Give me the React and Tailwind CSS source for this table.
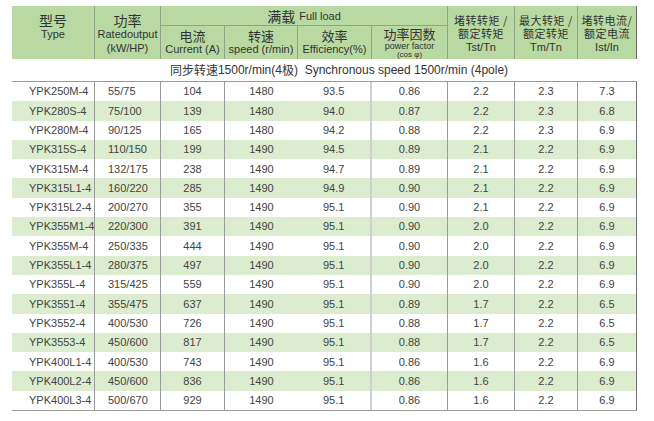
const rows = [
  ["YPK250M-4", "55/75", "104", "1480", "93.5", "0.86", "2.2", "2.3", "7.3"],
  ["YPK280S-4", "75/100", "139", "1480", "94.0", "0.87", "2.2", "2.3", "6.8"],
  ["YPK280M-4", "90/125", "165", "1480", "94.2", "0.88", "2.2", "2.3", "6.9"],
  ["YPK315S-4", "110/150", "199", "1490", "94.5", "0.89", "2.1", "2.2", "6.9"],
  ["YPK315M-4", "132/175", "238", "1490", "94.7", "0.89", "2.1", "2.2", "6.9"],
  ["YPK315L1-4", "160/220", "285", "1490", "94.9", "0.90", "2.1", "2.2", "6.9"],
  ["YPK315L2-4", "200/270", "355", "1490", "95.1", "0.90", "2.1", "2.2", "6.9"],
  ["YPK355M1-4", "220/300", "391", "1490", "95.1", "0.90", "2.0", "2.2", "6.9"],
  ["YPK355M-4", "250/335", "444", "1490", "95.1", "0.90", "2.0", "2.2", "6.9"],
  ["YPK355L1-4", "280/375", "497", "1490", "95.1", "0.90", "2.0", "2.2", "6.9"],
  ["YPK355L-4", "315/425", "559", "1490", "95.1", "0.90", "2.0", "2.2", "6.9"],
  ["YPK3551-4", "355/475", "637", "1490", "95.1", "0.89", "1.7", "2.2", "6.5"],
  ["YPK3552-4", "400/530", "726", "1490", "95.1", "0.88", "1.7", "2.2", "6.5"],
  ["YPK3553-4", "450/600", "817", "1490", "95.1", "0.88", "1.7", "2.2", "6.5"],
  ["YPK400L1-4", "400/530", "743", "1490", "95.1", "0.86", "1.6", "2.2", "6.9"],
  ["YPK400L2-4", "450/600", "836", "1490", "95.1", "0.86", "1.6", "2.2", "6.9"],
  ["YPK400L3-4", "500/670", "929", "1490", "95.1", "0.86", "1.6", "2.2", "6.9"],
];

const cols = "grid grid-cols-[83px_66px_64px_73px_74px_76px_67px_63px_59px]";
const cjk = { fontFamily: '"Noto Sans CJK SC", "Liberation Sans", sans-serif' };

// one class per body column: alignment + the vertical line on its right
const cellCls = [
  "justify-start pl-[17px] border-r border-[#9a9a9a]",
  "justify-start pl-[13px] border-r border-[#9a9a9a]",
  "justify-center border-r border-[#9a9a9a]",
  "justify-center",
  "justify-start pl-[25px] border-r-2 border-[#cfcfcf]",
  "justify-center border-r border-[#9a9a9a]",
  "justify-center border-r border-[#9a9a9a]",
  "justify-center border-r border-[#9a9a9a]",
  "justify-center border-r border-[#707070]",
];

function RatioHead({ top, unit, last }) {
  return (
    <div
      className={`row-span-2 flex flex-col items-center pt-[8px] border-r ${
        last ? "border-[#6a6a6a]" : "border-[#8ea486]"
      }`}
    >
      <span className="text-[11px] leading-[13px] whitespace-nowrap tracking-[0.5px]" style={cjk}>{top}</span>
      <span className="text-[11px] leading-[13px] tracking-[0.5px]" style={cjk}>{last ? "额定电流" : "额定转矩"}</span>
      <span className="text-[11px] leading-[14px]">{unit}</span>
    </div>
  );
}

function Header() {
  return (
    <div className={`${cols} grid-rows-[20px_33px] bg-[#b8d9a1] text-[#333]`}>
      <div className="row-span-2 flex flex-col items-center pt-[6px] border-r border-[#8ea486]">
        <span className="text-[14px] leading-[16px]" style={cjk}>型号</span>
        <span className="text-[11px] leading-[13px]">Type</span>
      </div>
      <div className="row-span-2 flex flex-col items-center pt-[6px] border-r border-[#8ea486]">
        <span className="text-[14px] leading-[16px]" style={cjk}>功率</span>
        <span className="text-[11px] leading-[13px]">Ratedoutput</span>
        <span className="text-[11px] leading-[15px]">(kW/HP)</span>
      </div>
      <div className="col-span-4 flex items-center justify-center gap-1 border-r border-b border-[#8ea486]">
        <span className="text-[14px] leading-[16px]" style={cjk}>满载</span>
        <span className="text-[11px] leading-[13px] pt-[1px]">Full load</span>
      </div>
      <RatioHead top="堵转转矩 /" unit="Tst/Tn" />
      <RatioHead top="最大转矩 /" unit="Tm/Tn" />
      <RatioHead top="堵转电流/" unit="Ist/In" last />

      <div className="flex flex-col items-center pt-[2px] border-r border-[#8ea486]">
        <span className="text-[13px] leading-[15px]" style={cjk}>电流</span>
        <span className="text-[11px] leading-[13px] whitespace-nowrap">Current (A)</span>
      </div>
      <div className="flex flex-col items-center pt-[2px] border-r border-[#8ea486]">
        <span className="text-[13px] leading-[15px]" style={cjk}>转速</span>
        <span className="text-[11px] leading-[13px] whitespace-nowrap">speed (r/min)</span>
      </div>
      <div className="flex flex-col items-center pt-[2px] border-r border-[#8ea486]">
        <span className="text-[13px] leading-[15px]" style={cjk}>效率</span>
        <span className="text-[11px] leading-[13px] whitespace-nowrap">Efficiency(%)</span>
      </div>
      <div className="flex flex-col items-center border-r border-[#8ea486]">
        <span className="text-[13px] leading-[16px]" style={cjk}>功率因数</span>
        <span className="text-[9px] leading-[8px] whitespace-nowrap">power factor</span>
        <span className="text-[8px] leading-[9px] whitespace-nowrap">(cos φ)</span>
      </div>
    </div>
  );
}

export default function App() {
  return (
    <div
      className="w-[654px] h-[421px] bg-white pl-[12px] pt-[6px] text-[#444]"
      style={{ fontFamily: '"Liberation Sans", Arial, sans-serif' }}
    >
      <div className="w-[625px]">
        <Header />
        <div className="h-[22px] flex items-center justify-center pl-[29px] text-[12px] text-[#333] whitespace-nowrap">
          <span style={cjk}>同步转速</span>
          <span>1500r/min(4</span>
          <span style={cjk}>极</span>
          <span>)&nbsp;&nbsp;Synchronous speed 1500r/min (4pole)</span>
        </div>
        <div className="border-t border-b border-[#9a9a9a]">
          {rows.map((r, i) => (
            <div
              key={r[0]}
              className={`${cols} h-[19.3px] text-[11px] ${i % 2 === 1 ? "bg-[#dcecce]" : "bg-white"}`}
            >
              {r.map((v, j) => (
                <div key={j} className={`flex items-center whitespace-nowrap ${cellCls[j]}`}>
                  {v}
                </div>
              ))}
            </div>
          ))}
        </div>
      </div>
    </div>
  );
}
